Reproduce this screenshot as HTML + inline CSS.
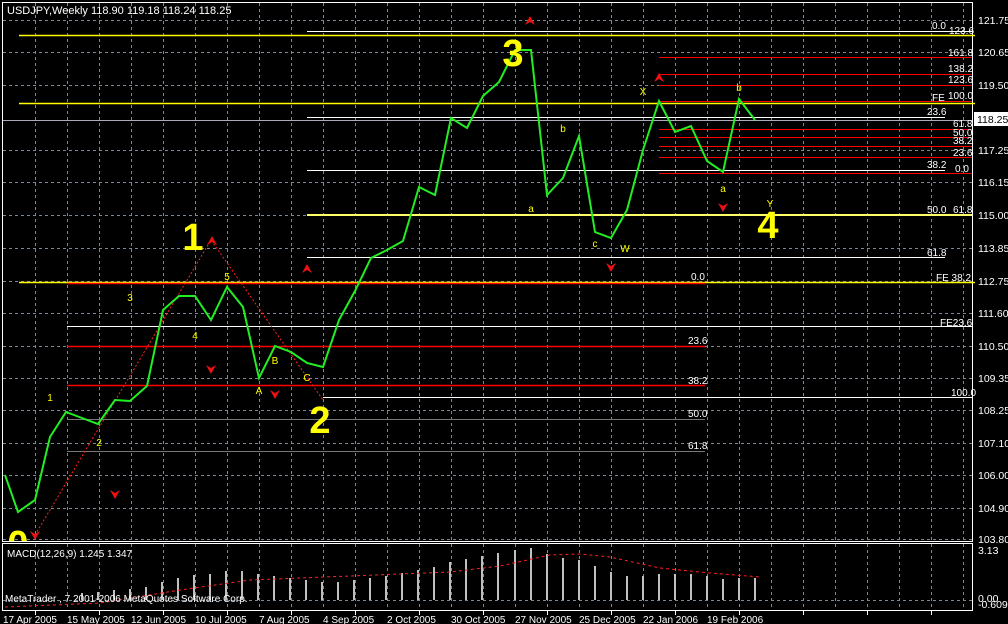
<!DOCTYPE html>
<html><head><meta charset="utf-8"><style>
html,body{margin:0;padding:0;background:#000;width:1008px;height:624px;overflow:hidden}
svg{display:block;font-family:"Liberation Sans",sans-serif}
</style></head><body>
<svg width="1008" height="624" viewBox="0 0 1008 624" xmlns="http://www.w3.org/2000/svg">
<defs><clipPath id="mc"><rect x="3" y="3" width="969" height="538"/></clipPath></defs>
<rect width="1008" height="624" fill="#000"/>
<g stroke="#778899" stroke-width="1" stroke-dasharray="3,3" fill="none">
<path d="M35.5 3V541M67.5 3V541M99.5 3V541M131.5 3V541M163.5 3V541M195.5 3V541M227.5 3V541M259.5 3V541M291.5 3V541M323.5 3V541M355.5 3V541M387.5 3V541M419.5 3V541M451.5 3V541M483.5 3V541M515.5 3V541M547.5 3V541M579.5 3V541M611.5 3V541M643.5 3V541M675.5 3V541M707.5 3V541M739.5 3V541M771.5 3V541M803.5 3V541M835.5 3V541M867.5 3V541M899.5 3V541M931.5 3V541M963.5 3V541"/>
<path d="M35.5 544V610M67.5 544V610M99.5 544V610M131.5 544V610M163.5 544V610M195.5 544V610M227.5 544V610M259.5 544V610M291.5 544V610M323.5 544V610M355.5 544V610M387.5 544V610M419.5 544V610M451.5 544V610M483.5 544V610M515.5 544V610M547.5 544V610M579.5 544V610M611.5 544V610M643.5 544V610M675.5 544V610M707.5 544V610M739.5 544V610M771.5 544V610M803.5 544V610M835.5 544V610M867.5 544V610M899.5 544V610M931.5 544V610M963.5 544V610"/>
<path d="M3 20.5H972M3 52.5H972M3 85.5H972M3 150.5H972M3 182.5H972M3 215.5H972M3 248.5H972M3 281.5H972M3 313.5H972M3 346.5H972M3 378.5H972M3 410.5H972M3 443.5H972M3 475.5H972M3 508.5H972M3 539.5H972M3 600.5H972"/>
</g>
<g stroke="#fff" fill="none" stroke-width="1">
<rect x="2.5" y="2.5" width="970" height="539"/>
<rect x="2.5" y="543.5" width="970" height="67"/>
</g>
<g stroke="#fff" stroke-width="1">
<path d="M35.5 611V615M99.5 611V615M163.5 611V615M227.5 611V615M291.5 611V615M355.5 611V615M419.5 611V615M483.5 611V615M547.5 611V615M611.5 611V615M675.5 611V615M739.5 611V615M803.5 611V615M867.5 611V615M931.5 611V615"/>
</g>
<g stroke-width="1" fill="none">
<path d="M19 35.5H975M19 103.5H975M19 282.5H975" stroke="#ffff00" stroke-width="1.5"/>
<path d="M307 31.5H972M307 117.5H945M307 170.5H945M307 257.5H945" stroke="#fff"/>
<path d="M307 215H972" stroke="#ffff66" stroke-width="2"/>
<path d="M3 120.5H972" stroke="#aab"/>
<path d="M659 57.5H972M659 74.5H972M659 85.5H972M659 101.5H972M659 129.5H972M659 137.5H972M659 146.5H972M659 157.5H972M659 173.5H972" stroke="#ff0000"/>
<path d="M67 283.5H705M67 346.5H705M67 385.5H705" stroke="#ff0000" stroke-width="1.5"/>
<path d="M67 326.5H972M323 397.5H972" stroke="#fff"/>
<path d="M67 419.5H705M67 451.5H705" stroke="#777"/>
</g>
<path d="M35 535L211 240L323 400" stroke="#ff2020" stroke-dasharray="2,2" fill="none"/>
<polyline fill="none" stroke="#22ee22" stroke-width="2" points="5,475 18,512 35,500 50,437 66,412 82,418 98,424 115,400 130,401 147,386 163,310 179,296 195,296 211,320 227,287 243,307 259,378 275,346 291,352 307,363 323,367 339,320 355,291 371,258 387,250 403,241 419,187 435,195 451,118 467,128 483,96 499,82 515,50 531,50 547,195 563,178 579,136 595,232 611,238 627,210 643,150 659,101 675,132 691,126 707,161 723,172 739,99 755,120"/>
<g fill="#ee1111">
<path d="M530 16l-5 9 5-3 5 3z"/><path d="M212 236l-5 9 5-3 5 3z"/><path d="M307 264l-5 9 5-3 5 3z"/><path d="M659 73l-5 9 5-3 5 3z"/>
<path d="M115 499l-5-9 5 3 5-3z"/><path d="M211 374l-5-9 5 3 5-3z"/><path d="M275 399l-5-9 5 3 5-3z"/><path d="M611 272l-5-9 5 3 5-3z"/><path d="M723 212l-5-9 5 3 5-3z"/><path d="M35 540l-5-9 5 3 5-3z"/>
</g>
<g fill="#ffff00" font-size="38" font-weight="bold" text-anchor="middle" clip-path="url(#mc)">
<text x="193" y="250">1</text><text x="320" y="433">2</text><text x="513" y="66">3</text><text x="768" y="238">4</text><text x="18" y="557">0</text>
</g>
<g fill="#ffff00" font-size="10" text-anchor="middle">
<text x="50" y="401">1</text><text x="99" y="446">2</text><text x="130" y="301">3</text><text x="195" y="339">4</text><text x="227" y="280">5</text>
<text x="259" y="394">A</text><text x="275" y="364">B</text><text x="307" y="381">C</text>
<text x="531" y="212">a</text><text x="563" y="132">b</text><text x="595" y="247">c</text><text x="625" y="252">W</text><text x="643" y="95">X</text><text x="723" y="192">a</text><text x="739" y="91">b</text><text x="770" y="207">Y</text>
</g>
<g fill="#fff" font-size="10">
<text x="932" y="29">0.0</text><text x="949" y="34">123.6</text><text x="948" y="56">161.8</text><text x="948" y="72">138.2</text><text x="948" y="83">123.6</text>
<text x="932" y="101">FE</text><text x="948" y="99">100.0</text><text x="927" y="115">23.6</text><text x="953" y="127">61.8</text><text x="953" y="136">50.0</text><text x="953" y="144">38.2</text><text x="953" y="156">23.6</text>
<text x="927" y="168">38.2</text><text x="955" y="172">0.0</text><text x="927" y="213">50.0</text><text x="953" y="213">61.8</text><text x="927" y="256">61.8</text>
<text x="936" y="281">FE 38.2</text><text x="940" y="326">FE23.6</text><text x="951" y="396">100.0</text>
<text x="691" y="280">0.0</text><text x="688" y="344">23.6</text><text x="688" y="384">38.2</text><text x="688" y="417">50.0</text><text x="688" y="449">61.8</text>
</g>
<g fill="#fff" font-size="10.5">
<text x="978" y="24">121.75</text><text x="978" y="56">120.65</text><text x="978" y="89">119.50</text><text x="978" y="154">117.25</text><text x="978" y="186">116.15</text><text x="978" y="219">115.00</text><text x="978" y="252">113.85</text><text x="978" y="285">112.75</text><text x="978" y="317">111.60</text><text x="978" y="350">110.50</text><text x="978" y="382">109.35</text><text x="978" y="414">108.25</text><text x="978" y="447">107.10</text><text x="978" y="479">106.00</text><text x="978" y="512">104.90</text><text x="978" y="543">103.80</text>
<text x="978" y="554">3.13</text><text x="978" y="602">0.00</text><text x="978" y="608">-0.609</text>
</g>
<rect x="974" y="112" width="34" height="14" fill="#fff"/>
<text x="977" y="123" font-size="10.5" fill="#000">118.25</text>
<text x="7" y="14" font-size="11" fill="#fff">USDJPY,Weekly  118.90 119.18 118.24 118.25</text>
<g stroke="#c0c0c0" stroke-width="2">
<path d="M82 600V593M98 600V592M114 600V590M130 600V589M146 600V587M162 600V582M178 600V578M194 600V575M210 600V574M226 600V571M242 600V571M258 600V574M274 600V576M290 600V578M306 600V580M322 600V582M338 600V582M354 600V580M370 600V578M386 600V576M402 600V573M418 600V570M434 600V567M450 600V562M466 600V559M482 600V556M498 600V553M515 600V550M531 600V548M547 600V554M563 600V558M579 600V560M595 600V566M611 600V572M627 600V576M643 600V576M659 600V574M675 600V574M691 600V574M707 600V576M723 600V579M739 600V578M755 600V578"/>
</g>
<polyline fill="none" stroke="#ff2020" stroke-dasharray="3,3" points="5,607 100,603 180,590 250,580 350,576 450,572 500,566 550,555 580,554 610,557 660,568 710,573 760,577"/>
<text x="7" y="557" font-size="10" fill="#fff">MACD(12,26,9) 1.245 1.347</text>
<text x="5" y="602" font-size="10" fill="#fff">MetaTrader , 7 2001-2006 MetaQuotes Software Corp.</text>
<g fill="#fff" font-size="10">
<text x="3" y="623">17 Apr 2005</text><text x="67" y="623">15 May 2005</text><text x="131" y="623">12 Jun 2005</text><text x="195" y="623">10 Jul 2005</text><text x="259" y="623">7 Aug 2005</text><text x="323" y="623">4 Sep 2005</text><text x="387" y="623">2 Oct 2005</text><text x="451" y="623">30 Oct 2005</text><text x="515" y="623">27 Nov 2005</text><text x="579" y="623">25 Dec 2005</text><text x="643" y="623">22 Jan 2006</text><text x="707" y="623">19 Feb 2006</text>
</g>
</svg>
</body></html>
